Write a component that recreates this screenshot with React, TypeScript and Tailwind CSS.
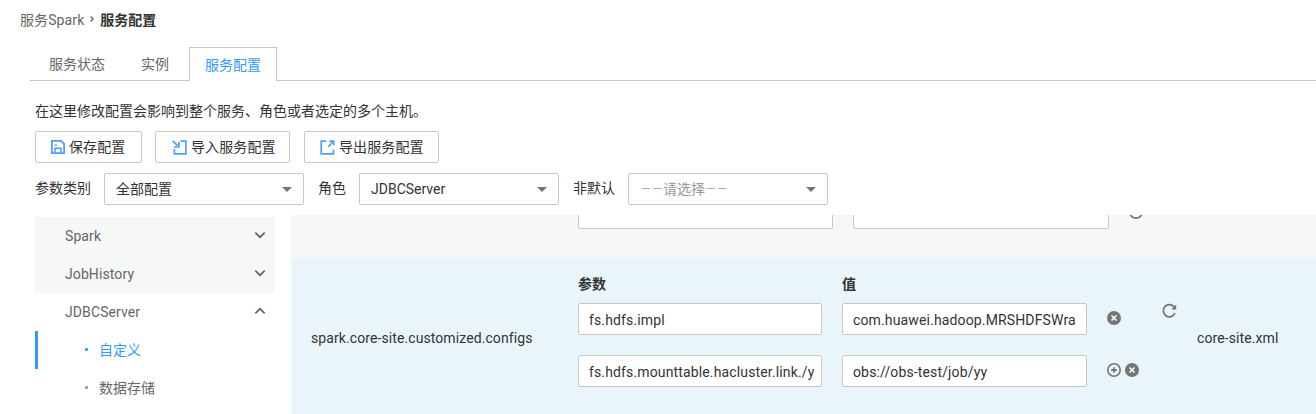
import React from 'react';

function SaveIcon() {
  return (
    <svg className="block h-[14px] w-[14px] shrink-0" viewBox="0 0 14 14" fill="none" stroke="#4da0ff" strokeWidth="1.8">
      <path d="M.9.9h9.3l2.9 2.9v9.3H.9z" />
      <path d="M4 13V8.3h6V13M3.8 5.2h1.9" strokeWidth="1.6" />
    </svg>
  );
}

function ImportIcon() {
  return (
    <svg className="block h-[15px] w-[15px] shrink-0" viewBox="0 0 15 15" fill="none" stroke="#4da0ff" strokeWidth="1.7">
      <path d="M8.6 1.2h5.3v12.6H2.4V8.9" />
      <path d="M.8.9 5.6 5.7" />
      <path d="M6.9 2v5h-5" />
    </svg>
  );
}

function ExportIcon() {
  return (
    <svg className="block h-[15px] w-[15px] shrink-0" viewBox="0 0 15 15" fill="none" stroke="#4da0ff" strokeWidth="1.7">
      <path d="M6.2 1.2H1.2v12.6h12.2V9.4" />
      <path d="M8.2 6.6 13 1.8" />
      <path d="M9.4 1.2h4.3v4.3" />
    </svg>
  );
}

function RemoveIcon() {
  return (
    <svg className="block h-[14px] w-[14px] shrink-0" viewBox="0 0 14 14">
      <circle cx="7" cy="7" r="7" fill="#757575" />
      <path d="m4.5 4.5 5 5m0-5-5 5" stroke="#f4fafd" strokeWidth="1.7" />
    </svg>
  );
}

function AddIcon() {
  return (
    <svg className="block h-[14px] w-[14px] shrink-0" viewBox="0 0 14 14" fill="none" stroke="#757575">
      <circle cx="7" cy="7" r="6.2" strokeWidth="1.6" />
      <path d="M7 4.2v5.6M4.2 7h5.6" strokeWidth="1.8" />
    </svg>
  );
}

function ResetIcon() {
  return (
    <svg className="block h-[16px] w-[16px] shrink-0" viewBox="0 0 16 16" fill="none" stroke="#757575" strokeWidth="1.7">
      <path d="M12.4 4.2A6.1 6.1 0 1 0 13 10.2" />
      <path d="M14.2 1.6v4.8H9.4z" fill="#757575" stroke="none" />
    </svg>
  );
}

function Chevron({ open }: { open?: boolean }) {
  return (
    <svg className="mb-[2px] block h-[8px] w-[12px]" viewBox="0 0 12 8" fill="none" stroke="#666" strokeWidth="1.8">
      <path d={open ? 'M1.3 6.4 6 1.8l4.7 4.6' : 'M1.3 1.6 6 6.2l4.7-4.6'} />
    </svg>
  );
}

function Button({ icon, label, width }: { icon: React.ReactNode; label: string; width: string }) {
  return (
    <button className={`flex h-8 items-center gap-[4px] rounded-[2px] border border-[#c7c7c7] bg-white ${width}`}>
      {icon}
      <span className="tracking-[0.1px]">{label}</span>
    </button>
  );
}

function Select({ children }: { children: React.ReactNode }) {
  return (
    <div className="flex h-8 w-[200px] items-center justify-between rounded-[2px] border border-[#c7c7c7] bg-white pr-[11px] pl-[12px]">
      <span className="-ml-px">{children}</span>
      <svg className="h-[5px] w-[10px]" viewBox="0 0 10 5">
        <path d="M0 0h10L5 5z" fill="#757575" />
      </svg>
    </div>
  );
}

function Field({ value, width }: { value: string; width: string }) {
  return (
    <div className={`flex h-8 shrink-0 items-center rounded-[2px] border border-[#c7c7c7] bg-white px-[10px] ${width}`}>
      <span className="pt-[2px] tracking-[0.14px] whitespace-nowrap">{value}</span>
    </div>
  );
}

function Group({ label, open }: { label: string; open?: boolean }) {
  return (
    <div className={`flex h-[38px] items-center justify-between pr-[9px] pl-[30px] ${open ? 'bg-white' : 'bg-[#f6f8f8]'}`}>
      <span className="tracking-[0.1px]">{label}</span>
      <Chevron open={open} />
    </div>
  );
}

function Leaf({ label, active }: { label: string; active?: boolean }) {
  return (
    <div
      className={`flex h-[38px] items-center gap-[11px] border-l-[3px] pl-[47px] ${
        active ? 'border-[#3399ff] text-[#3399ff]' : 'border-transparent'
      }`}
    >
      <span className={`mb-[2px] h-[3px] w-[3px] rounded-[1px] ${active ? 'bg-[#3399ff]' : 'bg-[#999]'}`} />
      <span>{label}</span>
    </div>
  );
}

export default function App() {
  return (
    <div className="flex h-[414px] w-full flex-col overflow-hidden bg-white font-[Roboto,'Noto_Sans_CJK_SC',sans-serif] text-[14px] leading-5 text-[#333]">
      <nav className="flex h-[47px] shrink-0 items-start pt-[10px] pl-5">
        <span className="tracking-[0.1px] text-[#666]">服务Spark</span>
        <svg className="mt-[6px] mr-[6px] ml-[6px] h-[6px] w-[4px]" viewBox="0 0 4 6" fill="none" stroke="#555" strokeWidth="1.2">
          <path d="m.6.5 2.5 2.5L.6 5.5" />
        </svg>
        <b>服务配置</b>
      </nav>

      <div className="ml-[30px] flex h-[34px] shrink-0 text-[#666]">
        <div className="w-[95px] border-b border-[#c7c7c7] pt-[7px] pl-[19px]">服务状态</div>
        <div className="w-[64px] border-b border-[#c7c7c7] pt-[7px] pl-[16px]">实例</div>
        <div className="w-[88px] border border-b-0 border-[#c7c7c7] pt-[7px] text-center text-[#3399ff]">服务配置</div>
        <div className="grow border-b border-[#c7c7c7]" />
      </div>

      <p className="mt-[20px] ml-[35px] h-5 shrink-0">在这里修改配置会影响到整个服务、角色或者选定的多个主机。</p>

      <div className="mt-[10px] ml-[35px] flex shrink-0">
        <Button icon={<SaveIcon />} label="保存配置" width="w-[107px] mr-[13px] pl-[15px]" />
        <Button icon={<ImportIcon />} label="导入服务配置" width="w-[135px] mr-[14px] pl-[16px]" />
        <Button icon={<ExportIcon />} label="导出服务配置" width="w-[135px] pl-[15px]" />
      </div>

      <div className="mt-[10px] ml-[35px] flex h-8 shrink-0 items-center">
        <span className="w-[69px] pb-[2px]">参数类别</span>
        <Select>全部配置</Select>
        <span className="w-[55px] pb-[2px] pl-[14px]">角色</span>
        <Select>JDBCServer</Select>
        <span className="w-[69px] pb-[2px] pl-[14px]">非默认</span>
        <Select>
          <span className="flex items-center text-[#999]">
            <span className="text-[11.5px]">－－</span>
            请选择
            <span className="text-[11.5px]">－－</span>
          </span>
        </Select>
      </div>

      <div className="mt-[10px] flex grow pl-[35px]">
        <aside className="mt-[2px] w-[240px] shrink-0 text-[#666]">
          <Group label="Spark" />
          <Group label="JobHistory" />
          <Group label="JDBCServer" open />
          <Leaf label="自定义" active />
          <Leaf label="数据存储" />
        </aside>

        <main className="ml-4 flex grow flex-col">
          <div className="flex h-[44px] shrink-0 items-start overflow-hidden bg-[#f6f8f8] pl-[287px]">
            <div className="h-[14px] w-[255px] rounded-b-[2px] border border-t-0 border-[#c7c7c7] bg-white" />
            <div className="ml-5 h-[14px] w-[256px] rounded-b-[2px] border border-t-0 border-[#c7c7c7] bg-white" />
            <svg className="ml-[20px] h-[5px] w-[14px]" viewBox="0 0 14 5" fill="none" stroke="#757575" strokeWidth="1.7">
              <path d="M.8-2.2a6.2 6.2 0 0 0 12.4 0" transform="translate(0 -.9)" />
            </svg>
          </div>

          <div className="flex grow bg-[#e9f5fb]">
            <div className="w-[287px] shrink-0 pt-[69px] pl-[20px] tracking-[0.09px]">spark.core-site.customized.configs</div>
            <div className="shrink-0">
              <div className="flex h-[44px] pt-[15px] font-bold">
                <span className="w-[264px]">参数</span>
                <span>值</span>
              </div>
              <div className="flex items-start">
                <Field value="fs.hdfs.impl" width="w-[244px] mr-[20px]" />
                <Field value="com.huawei.hadoop.MRSHDFSWra" width="w-[245px]" />
                <div className="flex w-[75px] gap-[3px] pt-[8px] pl-[20px]">
                  <RemoveIcon />
                </div>
                <ResetIcon />
              </div>
              <div className="mt-5 flex items-start">
                <Field value="fs.hdfs.mounttable.hacluster.link./y" width="w-[244px] mr-[20px]" />
                <Field value="obs://obs-test/job/yy" width="w-[245px]" />
                <div className="flex w-[75px] gap-[3.5px] pt-[8px] pl-[20px]">
                  <AddIcon />
                  <RemoveIcon />
                </div>
              </div>
            </div>
            <div className="pt-[69px] pl-[19px] tracking-[0.1px]">core-site.xml</div>
          </div>
        </main>
      </div>
    </div>
  );
}
